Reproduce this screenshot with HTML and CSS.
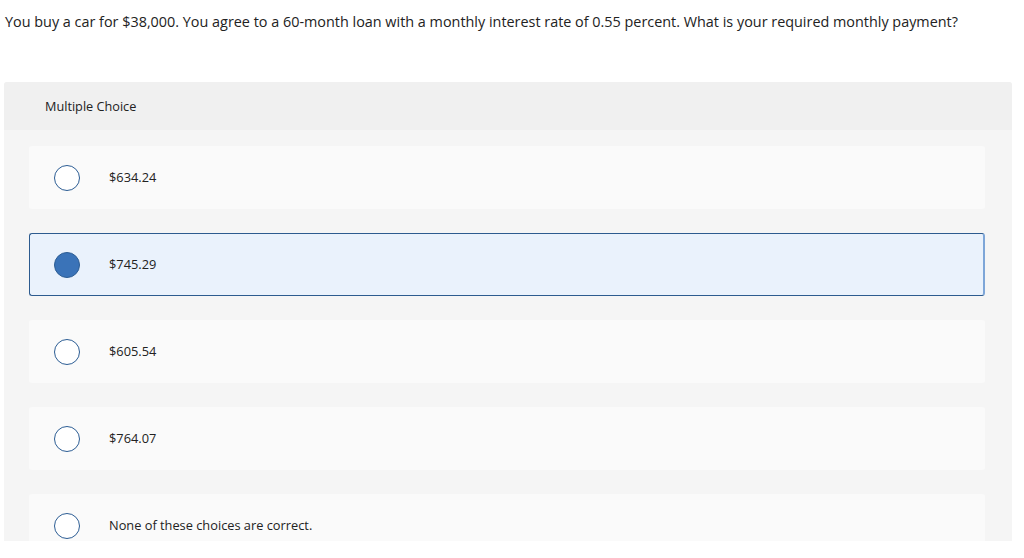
FILE: index.html
```html
<!DOCTYPE html>
<html>
<head>
<meta charset="utf-8">
<link rel="stylesheet" href="styles.css">
</head>
<body>
<div class="page">
  <p class="question">You buy a car for $38,000. You agree to a 60-month loan with a monthly interest rate of 0.55 percent. What is your required monthly payment?</p>
  <div class="panel">
    <div class="panel-head">Multiple Choice</div>
    <div class="choices">
      <div class="choice"><span class="radio"></span><span class="label">$634.24</span></div>
      <div class="choice selected"><span class="radio"></span><span class="label">$745.29</span></div>
      <div class="choice"><span class="radio"></span><span class="label">$605.54</span></div>
      <div class="choice"><span class="radio"></span><span class="label">$764.07</span></div>
      <div class="choice"><span class="radio"></span><span class="label">None of these choices are correct.</span></div>
    </div>
  </div>
</div>
</body>
</html>
```
FILE: styles.css
```css
html, body {
  margin: 0;
  padding: 0;
  background: #fff;
}
body {
  font-family: "Open Sans", "Liberation Sans", sans-serif;
  color: #222;
}
.page {
  height: 541px;
  overflow: hidden;
}
.question {
  margin: 0;
  padding: 12px 0 0 5px;
  font-size: 14.4px;
  line-height: 20px;
}
.panel {
  margin: 50px 12px 0 4px;
  background: #f5f5f5;
  border-radius: 3px;
}
.panel-head {
  background: #f0f0f0;
  height: 48px;
  display: flex;
  align-items: center;
  padding-left: 41px;
  font-size: 12.7px;
  border-radius: 3px 3px 0 0;
}
.panel-head span,
.panel-head {
  padding-bottom: 1px;
  box-sizing: border-box;
}
.choices {
  display: flex;
  flex-direction: column;
  gap: 24px;
  padding: 16px 27px 20px 25px;
}
.choice {
  height: 63px;
  background: #fafafa;
  border-radius: 3px;
  display: flex;
  align-items: center;
  padding-left: 24px;
  box-sizing: border-box;
  border: 1px solid transparent;
}
.choice.selected {
  background: #eaf2fc;
  border: 1px solid #2d5b8f;
  border-right: 2px solid #7ea6d8;
}
.radio {
  width: 24px;
  height: 24px;
  border-radius: 50%;
  border: 1.5px solid #2c5d94;
  background: #fff;
  flex: none;
}
.selected .radio {
  background: #3a73b8;
  border-color: #2c5d94;
}
.label {
  margin-left: 29px;
  margin-bottom: 2px;
  font-size: 12.8px;
}
```
